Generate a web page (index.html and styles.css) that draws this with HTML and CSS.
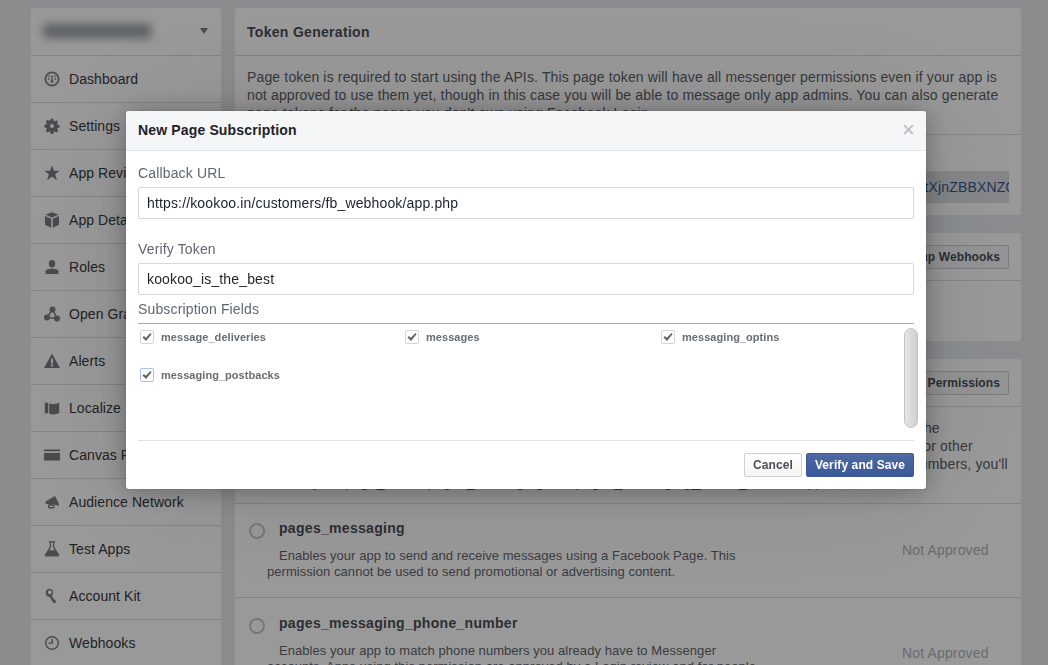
FILE: index.html
```html
<!DOCTYPE html>
<html lang="en">
<head>
<meta charset="utf-8">
<title>New Page Subscription</title>
<link rel="stylesheet" href="styles.css">
</head>
<body>
<div class="page">
  <nav class="side">
    <div class="app-pick"><span class="app-name"></span><span class="caret"></span></div>
    <a class="nav-item"><svg class="ico" viewBox="0 0 16 16"><path fill-rule="evenodd" d="M8 .5a7.500 7.500 0 1 0 0 15 7.500 7.500 0 0 0 0-15zm0 1.700a5.800 5.800 0 1 1 0 11.600A5.800 5.800 0 0 1 8 2.200z"/><path d="M7.200 4.500h1.600l-.2 4.500a1.400 1.400 0 1 1-1.200 0zM4 7.200h1.500v1.500H4zM10.500 7.200H12v1.500h-1.500zM4.900 4.300l1.100.9-.9 1-1.100-.9zM11.100 4.300l-1.100.9.900 1 1.100-.9z"/></svg>Dashboard</a>
    <a class="nav-item"><svg class="ico" viewBox="0 0 16 16"><path fill-rule="evenodd" d="M6.800 .8h2.400l.4 1.900 1.300.5 1.600-1 1.700 1.700-1 1.600.5 1.300 1.900.4v2.400l-1.900.4-.5 1.300 1 1.600-1.700 1.700-1.600-1-1.300.5-.4 1.900H6.800l-.4-1.900-1.300-.5-1.600 1-1.700-1.700 1-1.600-.5-1.300L.4 9.200V6.800l1.900-.4.5-1.300-1-1.600 1.700-1.700 1.600 1 1.300-.5zM8 6a2 2 0 1 0 0 4 2 2 0 0 0 0-4z"/></svg>Settings</a>
    <a class="nav-item"><svg class="ico" viewBox="0 0 16 16"><path d="M8 .5l2 5.300h5.700l-4.500 3.500 1.700 5.900L8 11.700l-4.900 3.500 1.700-5.900L.3 5.800H6z"/></svg>App Review</a>
    <a class="nav-item"><svg class="ico" viewBox="0 0 16 16"><path d="M8 .3l6.500 2.500L8 5.600 1.500 2.800zM1 4.100l6.200 2.700v8.900L1 12.800zM15 4.100L8.800 6.800v8.900l6.200-2.900z"/></svg>App Details</a>
    <a class="nav-item"><svg class="ico" viewBox="0 0 16 16"><path d="M8 1c2 0 3.300 1.500 3.300 3.600S10 8.800 8 8.800 4.700 6.700 4.700 4.600 6 1 8 1zM1.500 11.300c1.500-1 3-1.400 4.500-1.600h4c1.500.2 3 .6 4.500 1.600V15h-13z"/></svg>Roles</a>
    <a class="nav-item"><svg class="ico" viewBox="0 0 16 16"><circle cx="8.500" cy="3.500" r="3"/><circle cx="3" cy="11.500" r="3"/><circle cx="13" cy="12.500" r="3"/><path fill="none" stroke="#7a7d83" stroke-width="1.500" d="M8.500 3.500L3 11.500l10 1z"/></svg>Open Graph</a>
    <a class="nav-item"><svg class="ico" viewBox="0 0 16 16"><path fill-rule="evenodd" d="M8 .5l8 14.500H0zM7 5.500v5h2v-5zm0 6v2h2v-2z"/></svg>Alerts</a>
    <a class="nav-item"><svg class="ico" viewBox="0 0 16 16"><path d="M.8 2.800c1.200-.6 2.200-.5 3.400.2v10.600c-1.200-.6-2.200-.6-3.400 0zM5.200 3.300c3 1.300 6.500 1.300 10-.5v10.300c-3.500 1.700-7 1.700-10 .5z"/></svg>Localize</a>
    <a class="nav-item"><svg class="ico" viewBox="0 0 16 16"><path fill-rule="evenodd" d="M1 2.500h14a1 1 0 0 1 1 1v9a1 1 0 0 1-1 1H1a1 1 0 0 1-1-1v-9a1 1 0 0 1 1-1zM0 4.300V6h16V4.300z"/></svg>Canvas Payments</a>
    <a class="nav-item"><svg class="ico" viewBox="0 0 16 16"><path fill-rule="evenodd" d="M11 2l4 8v1.500L1.500 9.800V7.500zM4 10.500h6.500V13a1.500 1.500 0 0 1-1.500 1.500H5.500A1.500 1.500 0 0 1 4 13zm1.300 1.200V13h3.900v-1.300z"/></svg>Audience Network</a>
    <a class="nav-item"><svg class="ico" viewBox="0 0 16 16"><path fill-rule="evenodd" d="M4.800.3h6.400v1.300H10.200v4.200l4.800 7.700c.5 1-.2 2-1.300 2H2.300c-1.100 0-1.800-1-1.300-2l4.800-7.700V1.600h-1zm2.300 1.300v4.600L5.300 9.200h5.400L8.900 6.200V1.600z"/></svg>Test Apps</a>
    <a class="nav-item"><svg class="ico" viewBox="0 0 16 16"><path fill-rule="evenodd" d="M5.800.8a3.500 3.500 0 0 1 1.700 6.500l1.200 1.500v1.400l1 .3.300 1 1 .3.900 1.800-.5 1.300-2 .1-3.600-6.100A3.500 3.500 0 0 1 5.800.8zm0 1.500a2 2 0 1 0 0 4 2 2 0 0 0 0-4z"/></svg>Account Kit</a>
    <a class="nav-item"><svg class="ico" viewBox="0 0 16 16"><path fill-rule="evenodd" d="M8 1a7 7 0 1 0 0 14A7 7 0 0 0 8 1zm0 1.400a5.600 5.600 0 1 1 0 11.200A5.600 5.600 0 0 1 8 2.400z"/><path d="M7.500 4H9v4.800H4.500V7.400h3z"/></svg>Webhooks</a>
  </nav>

  <main class="main">
    <section class="panel">
      <header class="panel-head"><h2>Token Generation</h2></header>
      <p class="panel-text">Page token is required to start using the APIs. This page token will have all messenger permissions even if your app is not approved to use them yet, though in this case you will be able to message only app admins. You can also generate page tokens for the pages you don't own using Facebook Login.</p>
      <div class="token-row"><div class="token-field"><span class="token-text">EAAYdk4ZBZAqsBAOZCmtXjnZBBXNZCkQ7w</span></div></div>
    </section>

    <section class="panel">
      <header class="panel-head"><h2>Webhooks</h2><button class="panel-btn">Setup Webhooks</button></header>
      <div class="panel-empty"></div>
    </section>

    <section class="panel">
      <header class="panel-head"><h2>App Review for Messenger</h2><button class="panel-btn">Add to Submission Permissions</button></header>
      <p class="panel-text panel-lines">Some messaging permissions require review before your app can use them with people who are not all of the<br>developers or testers of your app. Once approved now, you will be able to reach the people on Messenger or other<br>platforms that have already opted in to it now. To request permission to match existing customers' phone numbers, you'll<br>also need your page_token, pages_messaging and pages_messaging_phone_number approved.</p>
      <div class="perm">
        <span class="radio"></span>
        <div class="perm-main">
          <h3>pages_messaging</h3>
          <p>Enables your app to send and receive messages using a Facebook Page. This permission cannot be used to send promotional or advertising content.</p>
        </div>
        <span class="status">Not Approved</span>
      </div>
      <div class="perm perm-next">
        <span class="radio"></span>
        <div class="perm-main">
          <h3>pages_messaging_phone_number</h3>
          <p>Enables your app to match phone numbers you already have to Messenger accounts. Apps using this permission are approved by a Login review and for people who are already customers.</p>
        </div>
        <span class="status">Not Approved</span>
      </div>
    </section>
  </main>
</div>

<div class="overlay"></div>

<div class="modal">
  <header class="modal-head">
    <h1>New Page Subscription</h1>
    <svg class="close" viewBox="0 0 12 12"><path d="M2 .5L6 4.500 10 .5 11.500 2 7.500 6l4 4-1.500 1.500-4-4-4 4L.5 10l4-4-4-4z"/></svg>
  </header>
  <div class="modal-body">
    <label class="field-label">Callback URL</label>
    <input class="text-input" type="text" value="https://kookoo.in/customers/fb_webhook/app.php" readonly>
    <label class="field-label label-gap">Verify Token</label>
    <input class="text-input" type="text" value="kookoo_is_the_best" readonly>
    <div class="fields-title">Subscription Fields</div>
    <div class="fields">
      <div class="check"><span class="box"><svg viewBox="0 0 12 12"><path d="M1.500 6.500l1.500-1.500 1.800 1.800L9.400 2l1.200 1.300L5 10z"/></svg></span>message_deliveries</div>
      <div class="check"><span class="box"><svg viewBox="0 0 12 12"><path d="M1.500 6.500l1.500-1.500 1.800 1.800L9.400 2l1.200 1.300L5 10z"/></svg></span>messages</div>
      <div class="check"><span class="box"><svg viewBox="0 0 12 12"><path d="M1.500 6.500l1.500-1.500 1.800 1.800L9.400 2l1.200 1.300L5 10z"/></svg></span>messaging_optins</div>
      <div class="check"><span class="box box-focus"><svg viewBox="0 0 12 12"><path d="M1.500 6.500l1.500-1.500 1.800 1.800L9.400 2l1.200 1.300L5 10z"/></svg></span>messaging_postbacks</div>
      <div class="scroll-thumb"></div>
    </div>
  </div>
  <footer class="modal-foot">
    <button class="btn btn-cancel">Cancel</button>
    <button class="btn btn-primary">Verify and Save</button>
  </footer>
</div>
</body>
</html>
```
FILE: styles.css
```css
* { box-sizing: border-box; }
html, body { margin: 0; height: 665px; overflow: hidden; }
body {
  background: #e9eaed;
  font-family: "Liberation Sans", Arial, sans-serif;
  font-size: 14px;
  letter-spacing: .15px;
  color: #4b4f56;
}
.page {
  display: grid;
  grid-template-columns: 190px 786px;
  column-gap: 14px;
  align-items: start;
  padding: 8px 0 0 31px;
}

/* sidebar */
.side {
  background: #fff;
  border-radius: 3px 3px 0 0;
  display: flex;
  flex-direction: column;
}
.app-pick {
  height: 48px;
  display: flex;
  align-items: center;
  justify-content: space-between;
  padding: 0 13px 0 12px;
  border-bottom: 1px solid #ddd;
}
.app-name {
  width: 108px;
  height: 14px;
  margin-top: -2px;
  background: #9a9ca0;
  filter: blur(5px);
}
.caret {
  width: 0;
  height: 0;
  margin-top: -1px;
  border-left: 4.5px solid transparent;
  border-right: 4.5px solid transparent;
  border-top: 6px solid #7a7d83;
}
.nav-item {
  height: 47px;
  display: flex;
  align-items: center;
  gap: 9px;
  padding-left: 13px;
  border-bottom: 1px solid #ddd;
  color: #383a40;
  letter-spacing: .07px;
  white-space: nowrap;
  overflow: hidden;
}
.ico { width: 16px; height: 16px; flex: none; fill: #7a7d83; }

/* main column */
.main { display: flex; flex-direction: column; gap: 18px; }
.panel { background: #fff; border-radius: 3px; }
.panel-head {
  height: 48px;
  display: flex;
  align-items: center;
  justify-content: space-between;
  padding: 0 12px;
  border-bottom: 1px solid #ddd;
}
.panel-head h2 { margin: 0; font-size: 14px; font-weight: bold; letter-spacing: .3px; color: #4b4f56; }
.panel-btn {
  height: 24px;
  padding: 0 8px;
  font: bold 12px "Liberation Sans", Arial, sans-serif;
  letter-spacing: .1px;
  color: #4b4f56;
  background: #f6f7f9;
  border: 1px solid #ced0d4;
  border-radius: 2px;
}
.panel-text {
  margin: 0;
  padding: 12px;
  line-height: 18px;
  color: #5b5e64;
  border-bottom: 1px solid #ddd;
}
.panel-lines { white-space: nowrap; overflow: hidden; }
.panel-empty { height: 60px; }
.token-row { padding: 36px 12px 12px; }
.token-field {
  height: 32px;
  display: flex;
  align-items: center;
  justify-content: flex-end;
  overflow: hidden;
  background: #dfe0e4;
  padding-right: 2px;
  white-space: nowrap;
}
.token-text { color: #365899; margin-right: -45px; }
.perm {
  display: flex;
  align-items: center;
  padding: 16px 12px 17px 14px;
  border-bottom: 1px solid #ddd;
}
.perm-next { padding-top: 17px; border-bottom: 0; }
.radio {
  width: 16px;
  height: 16px;
  flex: none;
  align-self: flex-start;
  margin-top: 3px;
  border: 2px solid #c4c6ca;
  border-radius: 50%;
}
.perm-main { width: 490px; margin-left: 2px; }
.perm-main h3 {
  margin: 0 0 12px 12px;
  font-size: 14px;
  line-height: 16px;
  letter-spacing: .3px;
  color: #4b4f56;
}
.perm-main p {
  margin: 0;
  font-size: 13px;
  line-height: 16px;
  letter-spacing: .05px;
  text-indent: 12px;
  color: #62656b;
}
.status { margin-left: 145px; color: #b0b2b6; white-space: nowrap; }

/* dim layer */
.overlay {
  position: fixed;
  inset: 0;
  background: rgba(0, 0, 0, .4);
}

/* dialog */
.modal {
  position: fixed;
  left: 126px;
  top: 111px;
  width: 800px;
  height: 378px;
  background: #fff;
  border-radius: 3px;
  box-shadow: 0 2px 26px rgba(0, 0, 0, .3), 0 0 120px rgba(0, 0, 0, .12), 0 0 0 1px rgba(0, 0, 0, .05);
  display: flex;
  flex-direction: column;
}
.modal-head {
  height: 40px;
  flex: none;
  display: flex;
  align-items: center;
  justify-content: space-between;
  padding: 0 12px 2px;
  background: #f5f6f7;
  border-bottom: 1px solid #e5e5e5;
  border-radius: 3px 3px 0 0;
}
.modal-head h1 { margin: 0; font-size: 14px; font-weight: bold; color: #1d2129; }
.close { width: 11px; height: 11px; fill: #bcc0c6; }
.modal-body { padding: 13px 12px 0; flex: none; }
.field-label {
  display: block;
  line-height: 18px;
  margin-bottom: 5px;
  color: #606770;
}
.label-gap { margin-top: 21px; }
.text-input {
  display: block;
  width: 100%;
  height: 32px;
  padding: 0 8px;
  border: 1px solid #d5d7db;
  border-radius: 2px;
  background: #fff;
  font: 14px "Liberation Sans", Arial, sans-serif;
  letter-spacing: .15px;
  color: #1d2129;
  outline: none;
}
.fields-title {
  margin-top: 5px;
  padding-bottom: 5px;
  line-height: 18px;
  color: #606770;
  border-bottom: 1px solid #aaa;
}
.fields {
  position: relative;
  height: 117px;
  padding: 6px 0 0 2px;
  display: grid;
  grid-template-columns: 265px 256px 1fr;
  grid-auto-rows: 38px;
  border-bottom: 1px solid #e1e2e4;
}
.check {
  display: flex;
  align-items: flex-start;
  gap: 7px;
  font-size: 11px;
  font-weight: bold;
  line-height: 14px;
  letter-spacing: .05px;
  color: #696c72;
}
.box {
  width: 14px;
  height: 14px;
  flex: none;
  display: flex;
  align-items: center;
  justify-content: center;
  background: #fff;
  border: 1px solid #d3d5d9;
  border-radius: 2px;
}
.box svg { width: 12px; height: 12px; fill: #62656d; }
.box-focus { border-color: #a9bff0; }
.scroll-thumb {
  position: absolute;
  right: -4px;
  top: 4px;
  width: 14px;
  height: 100px;
  border: 1px solid #c5c5c5;
  border-radius: 7px;
  background: linear-gradient(90deg, #e6e6e6, #cfcfcf);
}
.modal-foot {
  display: flex;
  justify-content: flex-end;
  gap: 4px;
  padding: 12px 12px 12px;
}
.btn {
  height: 24px;
  font: bold 12px "Liberation Sans", Arial, sans-serif;
  letter-spacing: .1px;
  border-radius: 2px;
}
.btn-cancel {
  width: 58px;
  padding: 0;
  color: #4b4f56;
  background: linear-gradient(#fff, #f4f5f6);
  border: 1px solid #ced0d4;
}
.btn-primary {
  width: 108px;
  padding: 0;
  color: #fff;
  background: linear-gradient(#4e69a2, #3b5998);
  border: 1px solid #3b5998;
}
```
